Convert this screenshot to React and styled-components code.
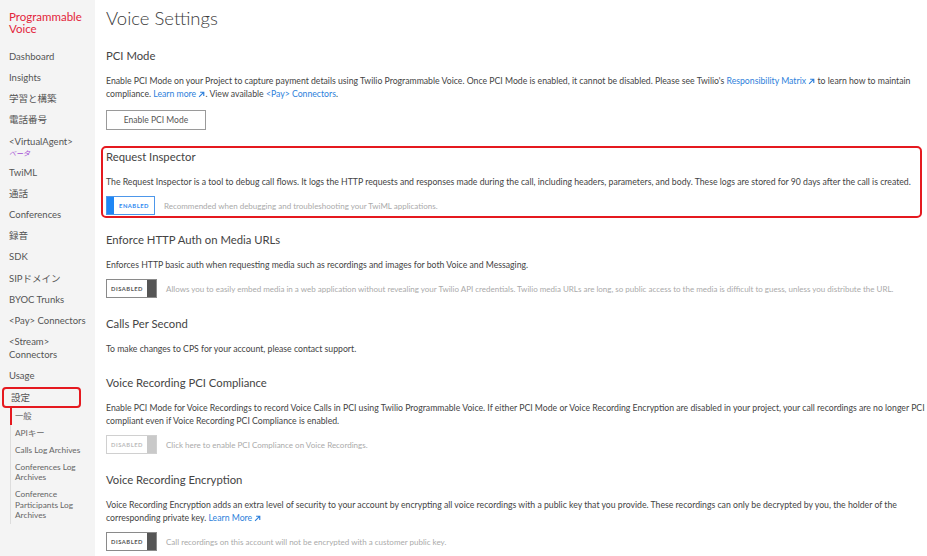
import React from "react";
import styled, { createGlobalStyle } from "styled-components";

const GlobalStyle = createGlobalStyle`
	html, body {
		margin: 0;
		padding: 0;
		background: #ffffff;
		font-family: Lato, "Noto Sans CJK JP", sans-serif;
	}
`;

const navItems = [
	{ label: "Dashboard" },
	{ label: "Insights" },
	{ label: "学習と構築" },
	{ label: "電話番号" },
	{ label: "<VirtualAgent>", beta: true },
	{ label: "TwiML" },
	{ label: "通話" },
	{ label: "Conferences" },
	{ label: "録音" },
	{ label: "SDK" },
	{ label: "SIPドメイン" },
	{ label: "BYOC Trunks" },
	{ label: "<Pay> Connectors" },
	{ label: ["<Stream>", "Connectors"] },
	{ label: "Usage" },
];

const subItems = [
	{ label: "一般", active: true },
	{ label: "APIキー" },
	{ label: "Calls Log Archives" },
	{ label: ["Conferences Log", "Archives"] },
	{ label: ["Conference", "Participants Log", "Archives"] },
];

function Lines({ label }) {
	if (!Array.isArray(label)) return label;
	return label.map((l, i) => (
		<React.Fragment key={i}>
			{i > 0 && <br />}
			{l}
		</React.Fragment>
	));
}

function ExtArrow() {
	return (
		<Arrow viewBox="0 0 8 8">
			<path d="M1.2 6.8 L6.4 1.6 M2.4 1.4 H6.6 V5.6" fill="none" stroke="currentColor" strokeWidth="1.3" />
		</Arrow>
	);
}

function Toggle({ on, faded }) {
	if (on) {
		return (
			<ToggleBox $on>
				<Knob $on />
				<ToggleLabel $on>ENABLED</ToggleLabel>
			</ToggleBox>
		);
	}
	return (
		<ToggleBox $faded={faded}>
			<ToggleLabel $faded={faded}>DISABLED</ToggleLabel>
			<Knob $faded={faded} />
		</ToggleBox>
	);
}

export default function App() {
	return (
		<>
			<GlobalStyle />
			<Layout>
				<Sidebar>
					<Brand>
						Programmable
						<br />
						Voice
					</Brand>
					<Nav>
						{navItems.map((item, i) => (
							<NavItem key={i}>
								<Lines label={item.label} />
								{item.beta && <Beta>ベータ</Beta>}
							</NavItem>
						))}
						<NavItem $boxed>設定</NavItem>
						<SubList>
							{subItems.map((item, i) => (
								<SubItem key={i} $active={item.active}>
									<Lines label={item.label} />
								</SubItem>
							))}
						</SubList>
					</Nav>
				</Sidebar>

				<Main>
					<Title>Voice Settings</Title>

					<Section $gap="16px">
						<Heading>PCI Mode</Heading>
						<Para>
							Enable PCI Mode on your Project to capture payment details using Twilio Programmable Voice. Once PCI Mode is enabled, it cannot be disabled. Please see Twilio's{" "}
							<Link>
								Responsibility Matrix <ExtArrow />
							</Link>{" "}
							to learn how to maintain
							<br />
							compliance.{" "}
							<Link>
								Learn more <ExtArrow />
							</Link>
							. View available <Link>&lt;Pay&gt; Connectors</Link>.
						</Para>
						<Button>Enable PCI Mode</Button>
					</Section>

					<Section $boxed $gap="14px">
						<Heading>Request Inspector</Heading>
						<Para>
							The Request Inspector is a tool to debug call flows. It logs the HTTP requests and responses made during the call, including headers, parameters, and body. These logs are stored for 90 days after the call is created.
						</Para>
						<ControlRow>
							<Toggle on />
							<Hint>Recommended when debugging and troubleshooting your TwiML applications.</Hint>
						</ControlRow>
					</Section>

					<Section $gap="18px">
						<Heading>Enforce HTTP Auth on Media URLs</Heading>
						<Para>Enforces HTTP basic auth when requesting media such as recordings and images for both Voice and Messaging.</Para>
						<ControlRow>
							<Toggle />
							<Hint>
								Allows you to easily embed media in a web application without revealing your Twilio API credentials. Twilio media URLs are long, so public access to the media is difficult to guess, unless you distribute the URL.
							</Hint>
						</ControlRow>
					</Section>

					<Section $gap="20px">
						<Heading>Calls Per Second</Heading>
						<Para>To make changes to CPS for your account, please contact support.</Para>
					</Section>

					<Section $gap="18px">
						<Heading>Voice Recording PCI Compliance</Heading>
						<Para>
							Enable PCI Mode for Voice Recordings to record Voice Calls in PCI using Twilio Programmable Voice. If either PCI Mode or Voice Recording Encryption are disabled in your project, your call recordings are no longer PCI
							<br />
							compliant even if Voice Recording PCI Compliance is enabled.
						</Para>
						<ControlRow>
							<Toggle faded />
							<Hint>Click here to enable PCI Compliance on Voice Recordings.</Hint>
						</ControlRow>
					</Section>

					<Section>
						<Heading>Voice Recording Encryption</Heading>
						<Para>
							Voice Recording Encryption adds an extra level of security to your account by encrypting all voice recordings with a public key that you provide. These recordings can only be decrypted by you, the holder of the
							<br />
							corresponding private key.{" "}
							<Link>
								Learn More <ExtArrow />
							</Link>
						</Para>
						<ControlRow>
							<Toggle />
							<Hint>Call recordings on this account will not be encrypted with a customer public key.</Hint>
						</ControlRow>
					</Section>
				</Main>
			</Layout>
		</>
	);
}

const Layout = styled.div`
	display: flex;
	height: 556px;
	overflow: hidden;
`;

const Sidebar = styled.aside`
	width: 95px;
	flex-shrink: 0;
	background-color: #f4f4f4;
	box-sizing: border-box;
	padding-top: 11px;
`;

const Brand = styled.div`
	color: #e3243b;
	font-size: 11.5px;
	line-height: 12px;
	padding-left: 9px;
	margin-bottom: 11px;
`;

const Nav = styled.nav`
	display: flex;
	flex-direction: column;
`;

const NavItem = styled.div`
	font-size: 9.5px;
	line-height: 13.15px;
	color: #555555;
	padding: ${(p) => (p.$boxed ? "2px 0 2px 7px" : "4px 0 4px 9px")};
	margin: ${(p) => (p.$boxed ? "0 14px 0 2px" : "0")};
	border: ${(p) => (p.$boxed ? "2px solid #e5191f" : "none")};
	border-radius: 4px;
	white-space: nowrap;
`;

const Beta = styled.div`
	color: #a44fd6;
	font-style: italic;
	font-size: 7px;
	line-height: 10px;
`;

const SubList = styled.div`
	margin-left: 10px;
	border-left: 1px solid #dddddd;
	display: flex;
	flex-direction: column;
`;

const SubItem = styled.div`
	font-size: 8.3px;
	line-height: 10.5px;
	color: #666666;
	padding: 3.25px 0 3.25px 3px;
	margin-left: -1px;
	border-left: 2px solid ${(p) => (p.$active ? "#e5191f" : "transparent")};
	white-space: nowrap;
`;

const Main = styled.main`
	flex: 1;
	min-width: 0;
	padding: 6px 5px 0 11px;
	display: flex;
	flex-direction: column;
`;

const Title = styled.h1`
	margin: 0 0 18px 0;
	font-size: 18.5px;
	line-height: 24px;
	font-weight: 300;
	color: #3a3a3a;
`;

const Section = styled.section`
	display: flex;
	flex-direction: column;
	align-items: flex-start;
	margin: ${(p) => (p.$boxed ? `0 0 ${p.$gap} -5px` : `0 0 ${p.$gap || "18px"} 0`)};
	padding: ${(p) => (p.$boxed ? "1px 0 1px 3px" : "0")};
	border: ${(p) => (p.$boxed ? "2px solid #e5191f" : "none")};
	border-radius: 5px;
`;

const Heading = styled.h2`
	margin: 0;
	font-size: 11.3px;
	line-height: 16px;
	font-weight: 400;
	color: #444444;
`;

const Para = styled.p`
	margin: 10px 0 0 0;
	font-size: 8.7px;
	line-height: 13px;
	color: #444444;
	white-space: nowrap;
`;

const Link = styled.a`
	color: #2d7fdb;
	white-space: nowrap;
`;

const Arrow = styled.svg`
	width: 7px;
	height: 7px;
	vertical-align: -0.5px;
`;

const Button = styled.button`
	margin-top: 10px;
	width: 100px;
	height: 20px;
	background: #ffffff;
	border: 1px solid #9a9a9a;
	font-family: Lato, sans-serif;
	font-size: 8.5px;
	color: #555555;
	padding: 0;
`;

const ControlRow = styled.div`
	display: flex;
	align-items: center;
	gap: 9px;
	margin-top: 8px;
`;

const ToggleBox = styled.div`
	display: flex;
	align-items: stretch;
	width: ${(p) => (p.$on ? "49px" : "51px")};
	height: 19px;
	box-sizing: border-box;
	border: 1px solid ${(p) => (p.$on ? "#4d97ea" : p.$faded ? "#d0d0d0" : "#8a8a8a")};
	background: #ffffff;
	flex-shrink: 0;
`;

const Knob = styled.div`
	width: ${(p) => (p.$on ? "7px" : "9px")};
	background: ${(p) => (p.$on ? "#1f86f5" : p.$faded ? "#c9c9c9" : "#555555")};
`;

const ToggleLabel = styled.span`
	flex: 1;
	display: flex;
	align-items: center;
	justify-content: center;
	font-size: 5.8px;
	font-weight: 700;
	letter-spacing: 0.5px;
	color: ${(p) => (p.$on ? "#2d87f0" : p.$faded ? "#bbbbbb" : "#555555")};
`;

const Hint = styled.span`
	font-size: 8px;
	color: #aaaaaa;
	white-space: nowrap;
`;
